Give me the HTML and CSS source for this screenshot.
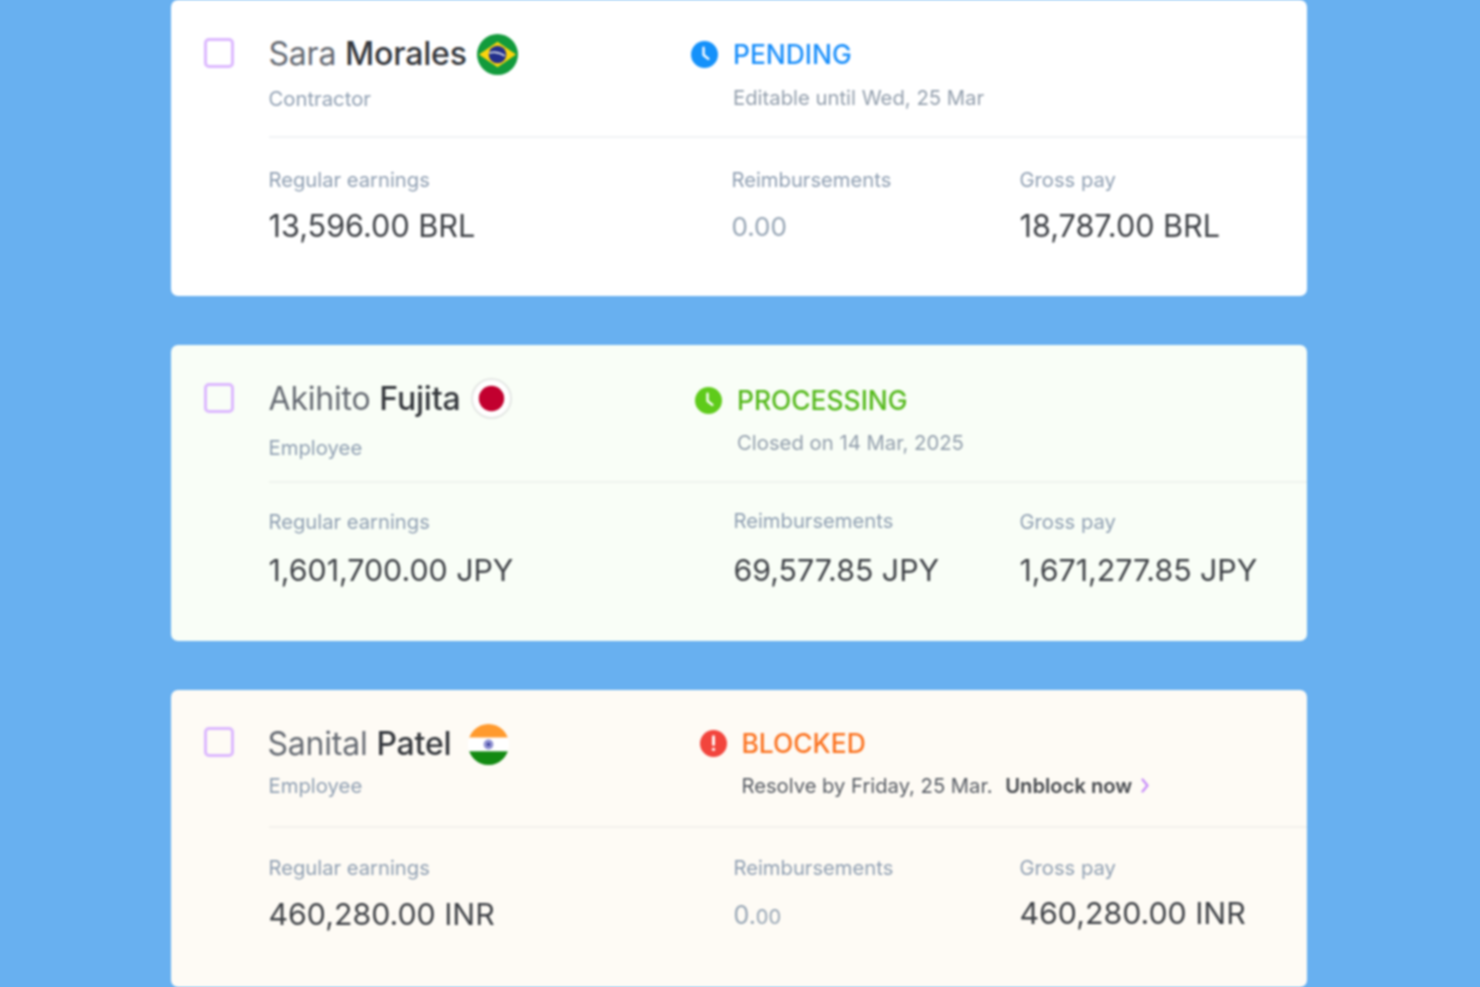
FILE: index.html

```html
<!DOCTYPE html>
<html lang="en">
<head>
  <meta charset="UTF-8" />
  <meta name="viewport" content="width=device-width, initial-scale=1.0" />
  <title>Payroll</title>
  <link rel="stylesheet" href="styles.css">
</head>
<body>
  <div class="list">

    <div class="card card-pending">
      <span class="check"></span>
      <div class="body">
        <div class="head">
          <div class="person">
            <div class="name-row">
              <span class="name">Sara <b>Morales</b></span>
              <svg class="flag" viewBox="0 0 42 42">
                <circle cx="21" cy="21" r="21" fill="#129b3c"/>
                <path d="M21 8 40 21 21 34 2 21Z" fill="#fbd40d"/>
                <circle cx="21" cy="21" r="9" fill="#23308c"/>
                <path d="M12.500 19.500c5-1.500 11-.5 16 3" fill="none" stroke="#e8edf2" stroke-width="1.500"/>
              </svg>
            </div>
            <div class="role">Contractor</div>
          </div>
          <div class="status">
            <div class="status-row">
              <svg class="status-icon" viewBox="0 0 28 28">
                <circle cx="14" cy="14" r="14" fill="#1491fa"/>
                <path d="M13 7v7.500l5 4" fill="none" stroke="#fff" stroke-width="2.500" stroke-linecap="round" stroke-linejoin="round"/>
              </svg>
              <span class="status-text">PENDING</span>
            </div>
            <div class="status-note">Editable until Wed, 25 Mar</div>
          </div>
        </div>
        <div class="stats">
          <div class="stat"><div class="label">Regular earnings</div><div class="value">13,596.00 BRL</div></div>
          <div class="stat"><div class="label">Reimbursements</div><div class="value muted">0.00</div></div>
          <div class="stat"><div class="label">Gross pay</div><div class="value">18,787.00 BRL</div></div>
        </div>
      </div>
    </div>

    <div class="card card-processing">
      <span class="check"></span>
      <div class="body">
        <div class="head">
          <div class="person">
            <div class="name-row">
              <span class="name">Akihito <b>Fujita</b></span>
              <svg class="flag" viewBox="0 0 42 42">
                <circle cx="21" cy="21" r="20" fill="#fff" stroke="#e4e7e4" stroke-width="2"/>
                <circle cx="21" cy="21" r="13" fill="#c2002f"/>
              </svg>
            </div>
            <div class="role">Employee</div>
          </div>
          <div class="status">
            <div class="status-row">
              <svg class="status-icon" viewBox="0 0 28 28">
                <circle cx="14" cy="14" r="14" fill="#5fcb1a"/>
                <path d="M13 7v7.500l5 4" fill="none" stroke="#fff" stroke-width="2.500" stroke-linecap="round" stroke-linejoin="round"/>
              </svg>
              <span class="status-text">PROCESSING</span>
            </div>
            <div class="status-note">Closed on 14 Mar, 2025</div>
          </div>
        </div>
        <div class="stats">
          <div class="stat"><div class="label">Regular earnings</div><div class="value">1,601,700.00 JPY</div></div>
          <div class="stat stat-reimb"><div class="label">Reimbursements</div><div class="value">69,577.85 JPY</div></div>
          <div class="stat"><div class="label">Gross pay</div><div class="value">1,671,277.85 JPY</div></div>
        </div>
      </div>
    </div>

    <div class="card card-blocked">
      <span class="check"></span>
      <div class="body">
        <div class="head">
          <div class="person">
            <div class="name-row">
              <span class="name">Sanital <b>Patel</b></span>
              <svg class="flag" viewBox="0 0 42 42">
                <clipPath id="round"><circle cx="21" cy="21" r="21"/></clipPath>
                <g clip-path="url(#round)">
                  <rect width="42" height="14" fill="#ff9a2e"/>
                  <rect y="14" width="42" height="14" fill="#fff"/>
                  <rect y="28" width="42" height="14" fill="#138a12"/>
                </g>
                <circle cx="21" cy="21" r="5" fill="#8d8fd0"/>
                <circle cx="21" cy="21" r="1.500" fill="#2a2f8f"/>
              </svg>
            </div>
            <div class="role">Employee</div>
          </div>
          <div class="status">
            <div class="status-row">
              <svg class="status-icon" viewBox="0 0 28 28">
                <circle cx="14" cy="14" r="14" fill="#f2453d"/>
                <path d="M14 7v8" fill="none" stroke="#fff" stroke-width="3" stroke-linecap="round"/>
                <circle cx="14" cy="20" r="1.700" fill="#fff"/>
              </svg>
              <span class="status-text">BLOCKED</span>
            </div>
            <div class="status-note">Resolve by Friday, 25 Mar. <a class="unblock">Unblock now</a>
              <svg class="chevron" viewBox="0 0 8 15"><path d="M1.500 1.500l5 6-5 6" fill="none" stroke="#c78bfa" stroke-width="2.200" stroke-linecap="round" stroke-linejoin="round"/></svg>
            </div>
          </div>
        </div>
        <div class="stats">
          <div class="stat"><div class="label">Regular earnings</div><div class="value">460,280.00 INR</div></div>
          <div class="stat"><div class="label">Reimbursements</div><div class="value muted">0.<small>00</small></div></div>
          <div class="stat stat-gross"><div class="label">Gross pay</div><div class="value">460,280.00 INR</div></div>
        </div>
      </div>
    </div>

  </div>
</body>
</html>
```

FILE: styles.css

```css
html, body {
  height: 987px;
  overflow: hidden;
}
body {
  margin: 0;
  background: #68b0f0;
  font-family: Inter, "Liberation Sans", sans-serif;
  color: #3d4045;
}
.list {
  width: 1136px;
  margin-left: 171px;
  display: flex;
  flex-direction: column;
  gap: 49px;
  filter: blur(0.8px);
}
.card {
  height: 296px;
  display: flex;
  padding-left: 33px;
  background: #fff;
  border-radius: 7px;
  box-sizing: border-box;
}
.card-processing {
  background: #f9fef7;
}
.card-blocked {
  background: #fefbf5;
  height: 297px;
}
.check {
  flex: none;
  width: 30px;
  height: 30px;
  margin: 38px 34.5px 0 0;
  border: 3px solid #dcb8ff;
  border-radius: 5px;
  box-sizing: border-box;
}
.card-blocked .check {
  margin-top: 37px;
}
.body {
  flex: 1;
}
.head {
  height: 138px;
  display: flex;
  box-sizing: border-box;
  border-bottom: 2px solid #f1f3f5;
}
.card-processing .head {
  border-bottom-color: #eff3ee;
}
.card-blocked .head {
  border-bottom-color: #f3f1ec;
}
.person {
  width: 422.5px;
  padding-top: 33px;
}
.card-processing .person {
  padding-top: 32px;
}
.name-row {
  display: flex;
  align-items: center;
  gap: 10px;
  height: 42px;
}
.name {
  font-size: 32px;
  color: #666b73;
  letter-spacing: -0.2px;
}
.name b {
  font-weight: 500;
  color: #35383d;
}
.card-pending .name {
  margin-top: -2px;
}
.card-blocked .name-row {
  gap: 17px;
}
.card-blocked .name {
  margin: -2px 0 0 -1px;
}
.flag {
  flex: none;
  width: 41px;
  height: 41px;
}
.role {
  margin-top: 11px;
  font-size: 20.3px;
  color: #8f9fb2;
}
.card-processing .role {
  margin-top: 16px;
}
.card-blocked .role {
  margin-top: 8px;
}
.status {
  padding-top: 39px;
}
.status-row {
  display: flex;
  align-items: center;
  gap: 15px;
  height: 30px;
}
.status-icon {
  flex: none;
  width: 27px;
  height: 27px;
}
.status-text {
  font-size: 26.4px;
  font-weight: 500;
}
.card-pending .status-text {
  color: #1a8ffb;
}
.card-processing .status-text {
  color: #55b91c;
}
.card-blocked .status-text {
  color: #fb7321;
}
.card-processing .status {
  margin-left: 4px;
  padding-top: 40px;
}
.card-blocked .status {
  margin-left: 8.5px;
  padding-top: 38px;
}
.status-note {
  margin: 16px 0 0 42px;
  font-size: 20.3px;
  color: #929eac;
}
.card-processing .status-note {
  margin-top: 15px;
}
.card-blocked .status-note {
  margin-top: 15px;
  font-size: 20.2px;
  color: #565b63;
}
.unblock {
  margin-left: 7px;
  font-weight: 600;
  color: #45484d;
}
.chevron {
  width: 8px;
  height: 15px;
  margin-left: 3px;
}
.stats {
  display: grid;
  grid-template-columns: 465px 286px 1fr;
  padding-top: 27px;
}
.card-pending .stats {
  grid-template-columns: 463px 288px 1fr;
  padding-top: 29px;
}
.card-processing .stats {
  padding-top: 26px;
}
.stat-reimb .label {
  margin-top: -1px;
}
.label {
  font-size: 20.2px;
  color: #8f9fb2;
}
.value {
  margin-top: 15px;
  font-size: 30.6px;
  color: #3f4247;
}
.card-processing .value {
  margin-top: 17.5px;
  font-size: 30.3px;
}
.card-processing .stat-reimb .value {
  margin-top: 18.5px;
}
.card-blocked .value {
  margin-top: 16px;
  font-size: 30.3px;
}
.card-blocked .stat-gross .value {
  margin-top: 15px;
}
.value small {
  font-size: 20px;
}
.card-pending .muted {
  margin-top: 19px;
  font-size: 26px;
  color: #94a3b3;
}
.card-blocked .muted {
  margin-top: 20px;
  font-size: 25px;
  color: #94a3b3;
}
```
